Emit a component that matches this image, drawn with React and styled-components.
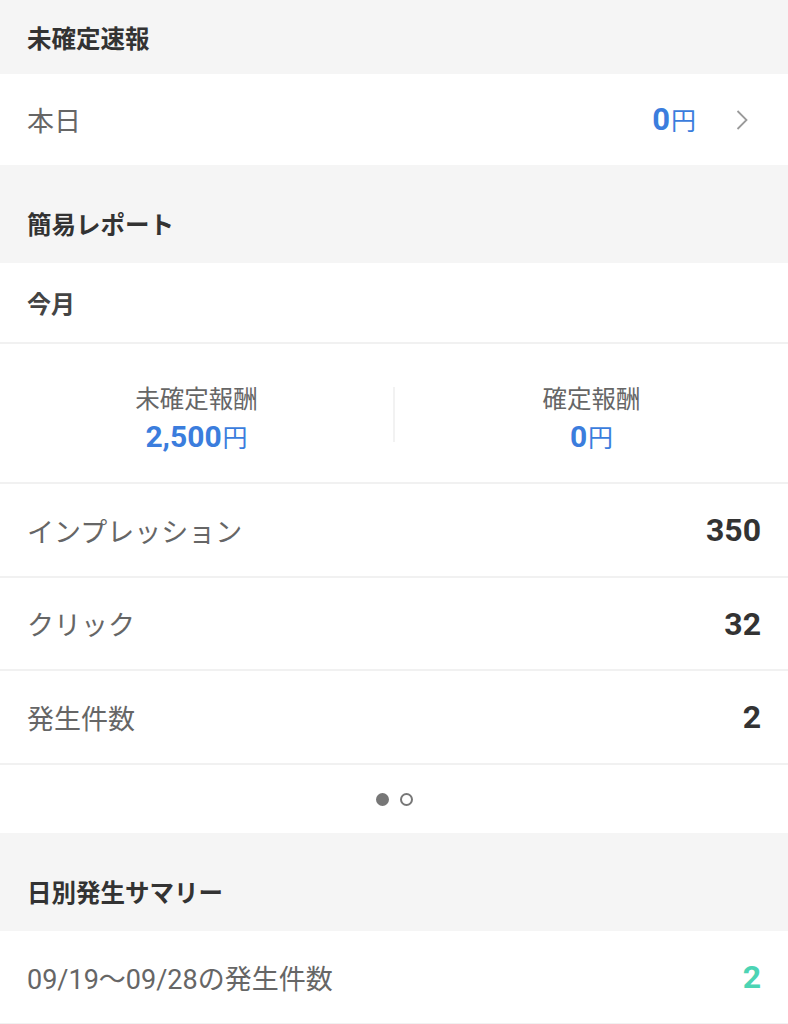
import styled, { createGlobalStyle } from "styled-components";

const Global = createGlobalStyle`
  body {
    margin: 0;
    background: #ffffff;
    font-family: Roboto, "Noto Sans CJK JP", sans-serif;
  }
`;

const Page = styled.div`
  width: 788px;
  display: flex;
  flex-direction: column;
`;

const SectionHeader = styled.div`
  background: #f5f5f5;
  height: ${(p) => (p.$tall ? 98 : 74)}px;
  padding: ${(p) => (p.$tall ? 19 : 0)}px 27px 0;
  box-sizing: border-box;
  display: flex;
  align-items: center;
  font-size: 24.5px;
  font-weight: 700;
  color: #333;
`;

const Row = styled.div`
  height: ${(p) => p.$h || 93}px;
  padding: 0 27px;
  display: flex;
  align-items: center;
  justify-content: space-between;
  border-bottom: ${(p) => (p.$line ? "2px solid #f1f1f1" : "none")};
  box-sizing: border-box;
`;

const Label = styled.span`
  font-size: 27px;
  color: #666;
`;

const SubTitle = styled.span`
  font-size: 24px;
  font-weight: 700;
  color: #444;
`;

const Count = styled.span`
  font-size: 32px;
  font-weight: 700;
  color: ${(p) => p.$color || "#333"};
`;

const Money = styled.span`
  display: inline-flex;
  align-items: baseline;
  color: #3b7ddd;
  font-size: ${(p) => p.$size || 31}px;
  font-weight: 700;
`;

const Yen = styled.span`
  font-size: 25px;
  font-weight: 400;
  margin-left: 1px;
`;

const Right = styled.div`
  display: flex;
  align-items: center;
  gap: 40px;
  padding-right: 13px;
`;

const Stats = styled.div`
  height: 140px;
  display: grid;
  grid-template-columns: 1fr 2px 1fr;
  align-items: center;
  border-bottom: 2px solid #f1f1f1;
  box-sizing: border-box;
`;

const Stat = styled.div`
  display: flex;
  flex-direction: column;
  align-items: center;
  gap: 3px;
  padding-top: 8px;
`;

const StatLabel = styled.span`
  font-size: 24.5px;
  color: #666;
`;

const VLine = styled.div`
  width: 2px;
  height: 55px;
  background: #f2f2f2;
  margin-top: 2px;
`;

const Dots = styled.div`
  height: 68px;
  display: flex;
  justify-content: center;
  align-items: center;
  gap: 11px;
`;

const Dot = styled.span`
  width: 13px;
  height: 13px;
  border-radius: 50%;
  box-sizing: border-box;
  background: ${(p) => (p.$on ? "#777" : "transparent")};
  border: 2px solid #777;
`;

const Chevron = () => (
  <svg width="12" height="24" viewBox="0 0 12 24">
    <polyline points="1.5,3 10.5,12 1.5,21" fill="none" stroke="#9a9a9a" strokeWidth="1.8" />
  </svg>
);

export default function App() {
  return (
    <Page>
      <Global />
      <SectionHeader>未確定速報</SectionHeader>
      <Row $h={91}>
        <Label>本日</Label>
        <Right>
          <Money>0<Yen>円</Yen></Money>
          <Chevron />
        </Right>
      </Row>
      <SectionHeader $tall>簡易レポート</SectionHeader>
      <Row $h={81} $line>
        <SubTitle>今月</SubTitle>
      </Row>
      <Stats>
        <Stat>
          <StatLabel>未確定報酬</StatLabel>
          <Money $size={30}>2,500<Yen>円</Yen></Money>
        </Stat>
        <VLine />
        <Stat>
          <StatLabel>確定報酬</StatLabel>
          <Money $size={30}>0<Yen>円</Yen></Money>
        </Stat>
      </Stats>
      <Row $h={94} $line>
        <Label>インプレッション</Label>
        <Count>350</Count>
      </Row>
      <Row $h={93} $line>
        <Label>クリック</Label>
        <Count>32</Count>
      </Row>
      <Row $h={94} $line>
        <Label>発生件数</Label>
        <Count>2</Count>
      </Row>
      <Dots>
        <Dot $on />
        <Dot />
      </Dots>
      <SectionHeader $tall>日別発生サマリー</SectionHeader>
      <Row $h={94} $line>
        <Label>09/19〜09/28の発生件数</Label>
        <Count $color="#4cd4b4">2</Count>
      </Row>
    </Page>
  );
}
